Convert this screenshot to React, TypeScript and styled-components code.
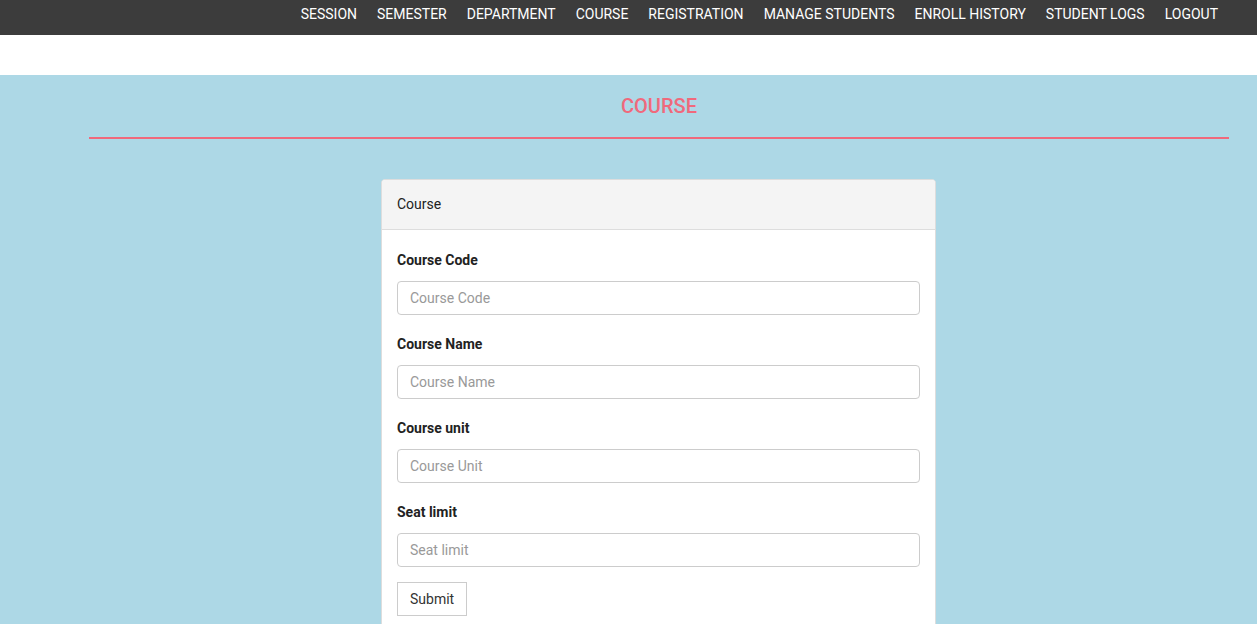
import React from "react";
import styled, { createGlobalStyle } from "styled-components";

const GlobalStyle = createGlobalStyle`
  html, body {
    margin: 0;
    padding: 0;
    overflow: hidden;
  }
  body {
    font-family: Roboto, "Liberation Sans", Arial, sans-serif;
    font-size: 14px;
    color: #333;
    background: #fff;
  }
  * { box-sizing: border-box; }
`;

const Page = styled.div`
  display: flex;
  flex-direction: column;
  min-height: 100vh;
`;

const NavBar = styled.nav`
  height: 35px;
  background: #3c3c3c;
  display: flex;
  justify-content: flex-end;
  padding-right: 29px;
`;

const NavLink = styled.a`
  display: block;
  padding: 4px 10px 11px;
  line-height: 20px;
  font-size: 14px;
  color: #fff;
  text-decoration: none;
  text-transform: uppercase;
  cursor: pointer;
`;

const Spacer = styled.div`
  height: 40px;
  background: #fff;
`;

const Main = styled.main`
  flex: 1;
  background: #add8e6;
  padding: 19px 28px 0 89px;
  display: flex;
  flex-direction: column;
`;

const Title = styled.h2`
  margin: 0;
  text-align: center;
  font-size: 20px;
  line-height: 24px;
  font-weight: 500;
  color: #f0697c;
`;

const Rule = styled.hr`
  margin: 19px 0 40px;
  border: 0;
  height: 2px;
  background: #f0697c;
`;

const Card = styled.section`
  align-self: flex-start;
  margin-left: 292px;
  width: 555px;
  background: #fff;
  border: 1px solid #ddd;
  border-radius: 4px;
  overflow: hidden;
`;

const CardHeader = styled.div`
  background: #f4f4f4;
  border-bottom: 1px solid #ddd;
  padding: 14px 15px;
  line-height: 21px;
  font-size: 14px;
  color: #222;
`;

const CardBody = styled.form`
  padding: 16px 15px 20px;
  display: flex;
  flex-direction: column;
`;

const FormGroup = styled.div`
  display: flex;
  flex-direction: column;
  margin-bottom: 15px;
`;

const Label = styled.label`
  display: block;
  font-size: 14px;
  line-height: 29px;
  font-weight: 700;
  color: #222;
  margin-bottom: 6px;
`;

const Input = styled.input`
  width: 100%;
  height: 34px;
  padding: 6px 12px;
  font-family: inherit;
  font-size: 14px;
  color: #555;
  background: #fff;
  border: 1px solid #ccc;
  border-radius: 4px;
  outline: none;
  &::placeholder {
    color: #999;
  }
`;

const SubmitButton = styled.button`
  align-self: flex-start;
  height: 34px;
  padding: 6px 12px;
  font-family: inherit;
  font-size: 14px;
  line-height: 20px;
  color: #333;
  background: #fff;
  border: 1px solid #ccc;
  border-radius: 0;
  cursor: pointer;
`;

const navItems = [
  "Session",
  "Semester",
  "Department",
  "Course",
  "Registration",
  "Manage Students",
  "Enroll History",
  "Student Logs",
  "Logout",
];

const fields = [
  { label: "Course Code", placeholder: "Course Code" },
  { label: "Course Name", placeholder: "Course Name" },
  { label: "Course unit", placeholder: "Course Unit" },
  { label: "Seat limit", placeholder: "Seat limit" },
];

export default function App() {
  return (
    <Page>
      <GlobalStyle />
      <NavBar>
        {navItems.map((item) => (
          <NavLink key={item}>{item}</NavLink>
        ))}
      </NavBar>
      <Spacer />
      <Main>
        <Title>COURSE</Title>
        <Rule />
        <Card>
          <CardHeader>Course</CardHeader>
          <CardBody onSubmit={(e) => e.preventDefault()}>
            {fields.map((f) => (
              <FormGroup key={f.label}>
                <Label>{f.label}</Label>
                <Input placeholder={f.placeholder} />
              </FormGroup>
            ))}
            <SubmitButton type="submit">Submit</SubmitButton>
          </CardBody>
        </Card>
      </Main>
    </Page>
  );
}
